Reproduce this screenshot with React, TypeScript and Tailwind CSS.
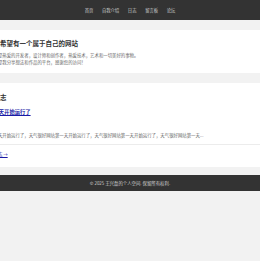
import React from "react";

const navItems = ["首页", "自我介绍", "日志", "留言板", "论坛"];

export default function App() {
  return (
    <div
      className="min-h-screen w-full overflow-hidden bg-[#f2f2f2]"
      style={{ fontFamily: '"Noto Sans CJK SC", "Noto Sans", sans-serif' }}
    >
      <header className="h-[20px] bg-[#333333] flex items-center justify-center">
        <nav className="flex items-center gap-[8.7px] text-[4.3px] leading-none text-[#cfcfcf]">
          {navItems.map((n) => (
            <span key={n}>{n}</span>
          ))}
        </nav>
      </header>

      <main className="flex flex-col items-center gap-[10px] pt-[10px]">
        <div className="flex w-full justify-center">
          <section className="w-[289px] shrink-0 bg-white px-[8px] pt-[9px] pb-[7px]">
            <h2 className="text-[6.5px] leading-[8px] font-bold text-[#333]">我希望有一个属于自己的网站</h2>
            <div className="mt-[5px] text-[4.4px] leading-[7px] text-[#666]">
              <p>我是热爱的开发者，设计师和创作者，热爱技术，艺术和一切美好的事物。</p>
              <p>这是我分享想法和作品的平台，感谢您的访问！</p>
            </div>
          </section>
        </div>

        <div className="flex w-full justify-center">
          <section className="w-[289px] shrink-0 bg-white px-[8px] pt-[10px] pb-[9px]">
            <h2 className="text-[6.5px] leading-[8px] font-bold text-[#333]">日志</h2>
            <div className="border-b border-[#ececec] pb-[5px]">
              <a className="mt-[8px] block text-[5.3px] leading-[7px] font-bold text-[#1a1aa6] underline">
                今天开始运行了
              </a>
              <p className="mt-[16px] text-[4.4px] leading-[7px] text-[#666]">
                今天开始运行了，天气很好网站第一天开始运行了，天气很好网站第一天开始运行了，天气很好网站第一天...
              </p>
            </div>
            <a className="mt-[6px] block text-[4.4px] leading-[7px] text-[#1a1aa6] underline">日志 →</a>
          </section>
        </div>
      </main>

      <footer className="mt-[8px] h-[16px] bg-[#333333] flex items-center justify-center text-[4.4px] leading-none text-[#cfcfcf]">
        © 2025 王兴磊的个人空间. 保留所有权利.
      </footer>
    </div>
  );
}
